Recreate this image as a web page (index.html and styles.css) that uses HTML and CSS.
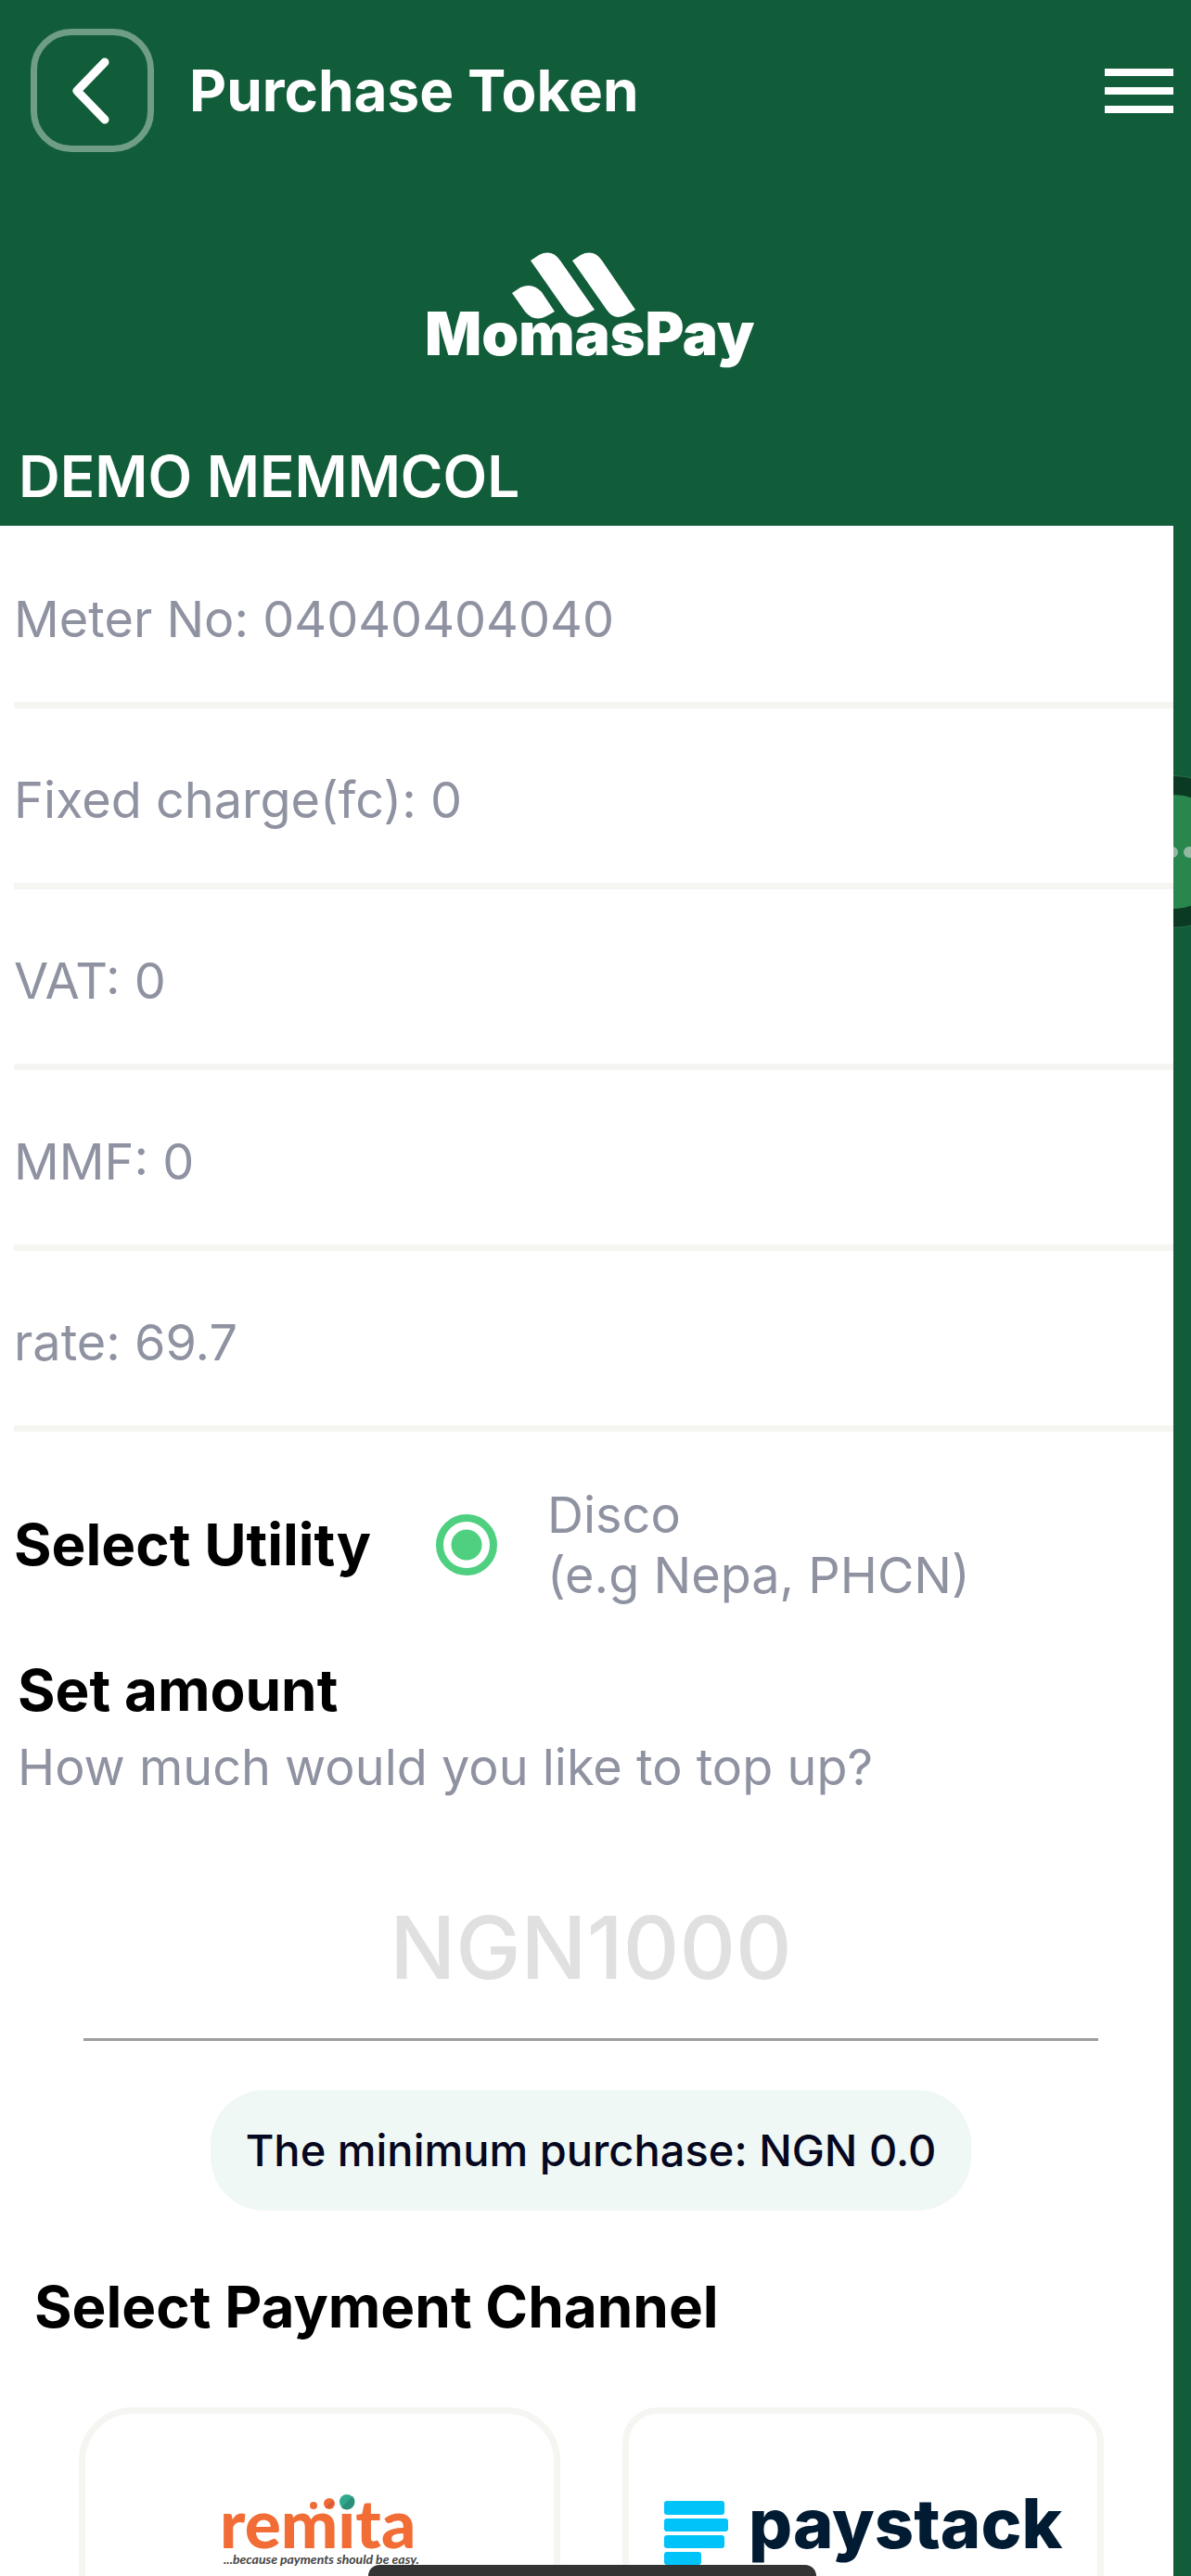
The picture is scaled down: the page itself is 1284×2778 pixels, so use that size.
FILE: index.html
```html
<!doctype html>
<html lang="en">
<head>
	<meta charset="UTF-8" />
	<meta name="viewport" content="width=device-width">
	<title>Purchase Token</title>
	<link rel="stylesheet" href="styles.css">
</head>
<body>
	<div class="screen">
		<header class="header">
			<div class="bar">
				<button type="button" class="back" aria-label="Back">
					<svg width="48" height="76" viewBox="0 0 48 76"><path d="M37 7 L7 38 L37 69"/></svg>
				</button>
				<h1 class="title">Purchase Token</h1>
				<button type="button" class="menu" aria-label="Menu">
					<span></span>
					<span></span>
					<span></span>
				</button>
			</div>
			<div class="logo">
				<svg width="360" height="132" viewBox="0 0 360 132" fill="#fff">
					<path d="M95 48 L104 42 Q117 36 127 47 L141 68 L132 73 Q119 80 109 68 Z"/>
					<path d="M115 13 L124 7 Q138 0 147 13 L184 66 L175 71 Q161 79 152 66 Z"/>
					<path d="M160 13 L169 7 Q183 0 192 13 L228 66 L219 71 Q206 79 197 66 Z"/>
					<text class="logo-text" x="1" y="115">MomasPay</text>
				</svg>
			</div>
			<h2 class="customer">DEMO MEMMCOL</h2>
		</header>

		<!-- chat bubble, half hidden by the panel -->
		<button type="button" class="chat" aria-label="Chat"><i></i><i></i><i></i></button>

		<main class="panel">
			<ul class="info">
				<li>Meter No: 04040404040</li>
				<li>Fixed charge(fc): 0</li>
				<li>VAT: 0</li>
				<li>MMF: 0</li>
				<li>rate: 69.7</li>
			</ul>

			<div class="utility">
				<h2>Select Utility</h2>
				<input type="radio" name="utility" id="disco" checked>
				<label for="disco">Disco<br>(e.g Nepa, PHCN)</label>
			</div>

			<div class="amount">
				<h2>Set amount</h2>
				<label for="amount">How much would you like to top up?</label>
			</div>
			<div class="field">
				<input type="text" id="amount" placeholder="NGN1000">
				<p class="minimum">The minimum purchase: NGN 0.0</p>
			</div>

			<h2 class="channel-title">Select Payment Channel</h2>
			<div class="channels">
				<button type="button" class="channel remita" aria-label="Remita">
					<svg width="220" height="90" viewBox="0 0 220 90">
						<text class="remita-name" x="2" y="65">remita</text>
						<circle cx="103" cy="19" r="4" fill="#ef6b35"/>
						<circle cx="120" cy="17" r="6" fill="#ef6b35"/>
						<path d="M124 13 A6 6 0 0 1 116 21 Z" fill="#dc5a3c"/>
						<circle cx="139" cy="15" r="8" fill="#2fa98c"/>
						<path d="M145 9 A8 8 0 0 1 133 21 Z" fill="#2b8f7a"/>
						<text class="remita-tag" x="6" y="82">...because payments should be easy.</text>
					</svg>
				</button>
				<button type="button" class="channel paystack" aria-label="Paystack">
					<svg width="440" height="90" viewBox="0 0 440 90">
						<g fill="#00c3f9">
							<rect x="5" y="14" width="65" height="15" rx="3"/>
							<rect x="5" y="33" width="69" height="14" rx="3"/>
							<rect x="5" y="51" width="65" height="14" rx="3"/>
							<rect x="5" y="69" width="40" height="14" rx="3"/>
						</g>
						<text class="paystack-name" x="96" y="65">paystack</text>
					</svg>
				</button>
			</div>
		</main>

		<div class="home"></div>
	</div>
</body>
</html>
```
FILE: styles.css
```css
*{
	box-sizing: border-box;
}
body{
	margin: 0;
	font-family: Inter, "Liberation Sans", sans-serif;
	background: #115c39;
}
h1,h2,p,ul{
	margin: 0;
	padding: 0;
}
h1,h2{
	font-size: 62px;
	line-height: 72px;
	font-weight: 700;
}
button{
	padding: 0;
	border: 0;
	background: none;
	font-family: inherit;
}
svg{
	display: block;
}
.screen{
	position: relative;
	height: 100vh;
	overflow: hidden;
	color: #000;
}

/* header */
.header{
	padding-top: 31px;
	color: #fff;
}
.bar{
	display: flex;
	align-items: center;
	padding: 0 19px 0 33px;
}
.back{
	display: flex;
	align-items: center;
	justify-content: center;
	width: 133px;
	height: 133px;
	border: 7px solid #6f9d86;
	border-radius: 44px;
}
.back path{
	fill: none;
	stroke: #fff;
	stroke-width: 9;
	stroke-linecap: round;
	stroke-linejoin: round;
}
.title{
	flex: 1;
	margin-left: 38px;
}
.menu{
	display: flex;
	flex-direction: column;
	gap: 12px;
	width: 74px;
}
.menu span{
	height: 8px;
	background: #fff;
}
.logo{
	display: flex;
	justify-content: center;
	margin: 104px 100px 0 90px;
}
.logo-text{
	font-size: 64px;
	font-weight: 900;
}
.customer{
	margin-top: 78px;
	padding: 0 20px 17px;
	font-weight: 600;
}

/* chat bubble */
.chat{
	position: absolute;
	top: 837px;
	right: -61px;
	display: flex;
	align-items: center;
	justify-content: center;
	gap: 6px;
	width: 163px;
	height: 163px;
	border: 20px solid #0b3a24;
	border-radius: 50%;
	background: #29864c;
	box-shadow: 0 0 0 1px #2b6c4c;
}
.chat i{
	width: 12px;
	height: 12px;
	border-radius: 50%;
	background: #93b8a3;
}

/* white panel */
.panel{
	position: relative;
	margin-right: 19px;
	min-height: 100%;
	background: #fff;
}
.info{
	list-style: none;
	padding: 2px 0 0 15px;
	font-size: 54px;
	line-height: 64px;
	color: #8f92a1;
}
.info li{
	padding: 67px 0 57px;
	border-bottom: 7px solid #f5f6f1;
}
.utility{
	display: flex;
	align-items: center;
	padding: 57px 15px 0;
}
.utility input{
	appearance: none;
	width: 66px;
	height: 66px;
	margin: 0 54px 0 70px;
	border: 8px solid #4ed080;
	border-radius: 50%;
	background: radial-gradient(circle, #4ed080 16px, #fff 17px);
}
.utility label,
.amount label{
	font-size: 54px;
	line-height: 65px;
	color: #8f92a1;
}
.amount{
	padding: 56px 19px 0;
}
.amount label{
	display: block;
	margin-top: 14px;
}
.field{
	padding: 106px 81px 0 90px;
}
.field input{
	display: block;
	width: 100%;
	height: 157px;
	padding: 0 0 42px;
	border: 0;
	border-bottom: 3px solid #9e9e9e;
	background: none;
	font-family: inherit;
	font-size: 94px;
	font-weight: 500;
	text-align: center;
	color: #000;
}
.field input::placeholder{
	color: #e0e0e0;
	opacity: 1;
}
.minimum{
	width: fit-content;
	margin: 53px auto 0;
	padding: 0 38px;
	border-radius: 58px;
	background: #eff8f4;
	font-size: 47px;
	line-height: 130px;
	font-weight: 500;
	color: #060720;
}
.channel-title{
	padding: 68px 37px 0;
}
.channels{
	display: flex;
	gap: 67px;
	padding: 72px 75px 60px 85px;
}
.channel{
	flex: 1;
	display: flex;
	justify-content: center;
	height: 240px;
	padding-top: 80px;
	border: 7px solid #f5f6f1;
	border-radius: 58px;
}
.paystack{
	border-radius: 38px;
}
.remita-name{
	font-family: Lato, sans-serif;
	font-size: 73px;
	font-weight: 900;
	fill: #f26c36;
}
.remita-tag{
	font-family: Lato, sans-serif;
	font-size: 14px;
	font-style: italic;
	font-weight: 700;
	fill: #444;
}
.paystack-name{
	font-size: 74px;
	font-weight: 800;
	fill: #011b33;
}

/* home indicator */
.home{
	position: absolute;
	left: 397px;
	right: 404px;
	bottom: 0;
	height: 12px;
	border-radius: 12px 12px 0 0;
	background: #333;
}
```
